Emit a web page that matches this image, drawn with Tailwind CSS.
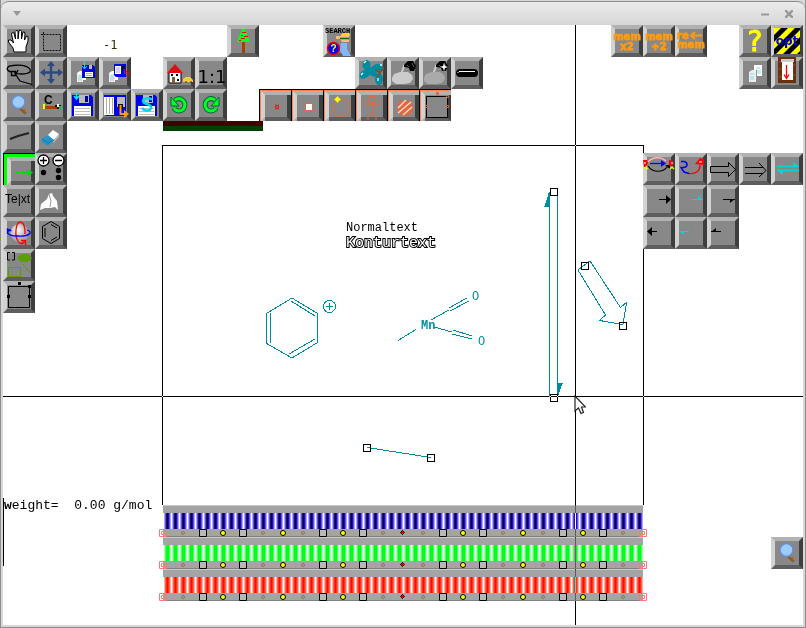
<!DOCTYPE html>
<html lang="en">
<head>
    <meta charset="UTF-8">
    <meta name="viewport" content="width=device-width, initial-scale=1.0">
    <title>Molecule editor</title>
    <script src="https://cdn.jsdelivr.net/npm/@tailwindcss/browser@4"></script>
</head>
<body class="bg-[#d8d8d8]">
    <div class="min-h-screen flex flex-col border-x border-b border-[#8c8c8c] bg-[#d8d8d8]">

        <header class="mt-px h-6 flex items-center justify-between px-2 rounded-t-lg border-t border-[#8c8c8c] bg-linear-to-b from-[#ececec] to-[#d6d6d6]">
            <button type="button" aria-label="Window menu" class="p-1">
                <svg class="w-2 h-[5px]" viewBox="0 0 8 5"><path d="M0 0h8L4 5z" fill="#999"/></svg>
            </button>
            <div class="flex items-center gap-4">
                <button type="button" aria-label="Minimize"><svg class="size-2" viewBox="0 0 8 8"><path d="M0 4.5h8" stroke="#999" stroke-width="2"/></svg></button>
                <button type="button" aria-label="Close" class="mr-1"><svg class="size-2" viewBox="0 0 8 8"><path d="M0 0L8 8M8 0L0 8" stroke="#999" stroke-width="2.5"/></svg></button>
            </div>
        </header>

        <main class="relative flex-1 mx-[2px] mb-[2px] bg-white overflow-hidden isolate">
            <div id="board" class="grid grid-cols-[repeat(25,minmax(32px,1fr))] auto-rows-[32px]">

                <!-- drawing page -->
                <section class="col-start-6 col-end-21 row-start-4 row-end-16 mt-6 -ml-px -mr-px border-x border-t border-black" aria-label="Drawing page">
                    <svg class="w-full h-full overflow-visible" viewBox="163 146 480 359" fill="none" stroke="#008ca0" shape-rendering="crispEdges">
                        <g stroke="none" font-family="'Liberation Mono', monospace">
                            <text x="346" y="231" font-size="12" fill="#000">Normaltext</text>
                            <text x="346" y="247" font-size="15" fill="#fff" stroke="#000" stroke-width="2" paint-order="stroke">Konturtext</text>
                            <g font-size="12" fill="#008ca0">
                                <text x="421" y="329" font-weight="bold">Mn</text>
                                <text x="472" y="300">O</text>
                                <text x="478" y="345">O</text>
                            </g>
                        </g>
                        <path d="M292 298L317.500 313.500V342.500L292 358L266.500 343.500V313.500Z"/>
                        <path d="M270.500 313V343M291 301L315 316M289 354L315 339"/>
                        <circle cx="329.500" cy="306.500" r="6"/>
                        <path d="M326 306.500h7M329.500 303v7"/>
                        <path d="M398 340.500L416 329.500M431 320L449 310M449 308L467 298M450 311L469 301M434 327L452 332M453 330L472 336M452 334L472 339"/>
                        <path d="M549.500 192V397M557.500 192V397"/>
                        <path d="M549.500 192L545 206.500H549.500ZM557.500 396L562 383.500H557.500Z" fill="#008ca0"/>
                        <path d="M578 270L590 261L620.500 307.500L626.500 302.500L623 324.500L599.500 320.500L605.500 315Z"/>
                        <path d="M367 447.500L431 457.500"/>
                        <path stroke="#000" d="M550.500 188.500h7v7h-7zM550.500 394.500h7v7h-7zM581.500 262.500h7v7h-7zM619.500 322.500h7v7h-7zM363.500 444.500h7v7h-7zM427.500 454.500h7v7h-7z"/>
                    </svg>
                </section>

                <p class="col-start-4 row-start-1 pl-1 pt-3 leading-4 text-[12px] text-[#333300] font-[DejaVu_Sans_Mono,monospace]">-1</p>

                <div class="col-start-6 col-end-10 row-start-4 w-[100px]">
                    <div class="h-[5px] bg-[#400000]"></div>
                    <div class="h-[5px] bg-[#004000]"></div>
                </div>

                <p class="col-start-1 col-end-6 row-start-15 row-end-18 mt-[25px] mb-[3px] border-l border-black leading-4 text-[13px] text-black whitespace-pre font-[Liberation_Mono,monospace]"><b>w</b>eight=  0.00 g/mol</p>
            </div>

            <!-- crosshair and pointer -->
            <div class="absolute inset-y-0 left-[572px] w-px bg-white mix-blend-difference pointer-events-none"></div>
            <div class="absolute inset-x-0 top-[371px] h-px bg-white mix-blend-difference pointer-events-none"></div>
            <svg class="absolute left-[571px] top-[370px] w-3 h-5 pointer-events-none" viewBox="0 0 12 20"><path d="M1 1V16L4.500 13L7 18.500L9.500 17.500L7.500 12H11.500Z" fill="#fff" stroke="#222" stroke-width="1.200"/></svg>
        </main>
    </div>

    <script>
        const board = document.getElementById("board");

        // Shared pieces of artwork, all drawn on a 32x32 tile
        const lens = `<path d="M17 18L23 24" stroke="#8a5a28" stroke-width="4"/><path d="M18 18L24 23" stroke="#d09050" stroke-width="1"/><circle cx="15.500" cy="13" r="6.500" fill="#9ccbff" stroke="#6c8cd0" stroke-width="1.500"/>`;
        const sheets = `<path d="M13 14h6v9h-9v-7z" fill="#fff"/><path d="M10 17h6v8h-6z" fill="#eee"/><path d="M11 19h4M11 21h4M11 23h4" stroke="#8dd"/>`;
        const disk = `<path d="M5 6h19l2 2v19H5z" fill="#0000f0"/><path d="M12 6h10v8H12z" fill="#bbb"/><path d="M18 7h3v6h-3z" fill="#0000a0"/><path d="M7 17h17v10H7z" fill="#fff"/><path d="M8 19.500h15M8 22.500h15M8 25.500h15" stroke="#bbb"/>`;
        const mark = (top, bottom) => `<g font-family="'DejaVu Sans', sans-serif" font-weight="bold" font-size="10" fill="#ff9a10" stroke="#ff9a10" stroke-width=".8" text-anchor="middle"><text x="16" y="15">${top}</text><text x="16" y="25">${bottom}</text></g>`;
        const lamp = (cloud) => `<path d="M14 18L17 9l4 1" fill="none" stroke="#ccc" stroke-width="2"/><path d="M5 21l2-4 6-2h8l4 3 1 4-3 4-6 1H9l-4-3z" fill="${cloud}"/><path d="M17 8l4-4h5l3 5-2 5h-4l-1-3-5-1z" fill="#000"/><path d="M20 8l2 2M25 6l2 4" stroke="#666"/>`;
        const frame = (color, inset) => `<path d="M0 32V0H32V${inset}H${inset}V32Z" fill="${color}"/>`;
        const picked = (color, w) => frame("#b2b2b2", w + 5) + `<path d="M${w + 1} ${w + 1}L${w + 5} ${w + 5}V28L${w + 1} 32Z" fill="#d2d2d2"/>` + frame(color, w + 1) + frame("#000", 1);
        const turn = `<path d="M12 11C18 7 24 13 21 19C19 23 13 23 11 19" fill="none" stroke="#063" stroke-width="5"/><path d="M8 8v9h8z" fill="#0f2" stroke="#063"/><path d="M12 11C18 7 24 13 21 19C19 23 13 23 11 19" fill="none" stroke="#0f2" stroke-width="3"/>`;

        const tools = [
            [1, 1, "Pan", `<path d="M11 27L10 23L5.500 17V15H8L10.500 18L8.500 9L9.500 7.500L11 8L12.500 14L12 6.500L13 5.500L15 6V14L16 5.500L17.500 5L18.500 6.500V14L20 7L21.500 7L22 9L21.500 15L23.500 11L25 11.500V16L23 22V27Z" fill="#fff" stroke="#000"/>`],
            [2, 1, "Select area", `<path d="M8.500 9.500h17v16h-17zM6 9.500h2M8.500 7v2" fill="none" stroke="#111" stroke-dasharray="2 1"/>`],
            [1, 2, "Lasso", `<path d="M9 15C2 14 3 9 10 8.500C20 7 29 10 27 15C23 18 14 17 11 16M8.500 14.500h4v4h-4zM13 18L17 24L29 27.500M12 19L15 13" fill="none" stroke="#000" stroke-width="1.300"/>`],
            [2, 2, "Move", `<path d="M16 6V25M7 15.500H26" stroke="#2c4a80" stroke-width="2.500"/><path d="M12 9l4-5 4 5zM12 22l4 5 4-5zM10 11.500l-5 4 5 4zM23 11.500l5 4-5 4z" fill="#2c4a80"/>`],
            [3, 2, "Save copy", sheets + `<path d="M15 8h11l2 2v11H15z" fill="#0000f0"/><path d="M18 15h8v5h-8z" fill="#fff"/><path d="M22 8h3v4h-3z" fill="#bbb"/><path d="M19 16.500h6M19 18.500h6" stroke="#aaa"/><path d="M17.500 5v6M15 9l2.500 3L20 9" stroke="#00e8f0" fill="none"/>`],
            [4, 2, "Load copy", sheets + `<path d="M15 7h12v13H17l-2-2z" fill="#0000f0"/><path d="M16 9h6v8h-6z" fill="#fff"/><path d="M18 10v6M20 10v6" stroke="#aaa"/><path d="M23 9h3v4h-3z" fill="#111"/><path d="M25.500 12v4.500h4M27 14l3 2.500-3 2.500" stroke="#f00" fill="none"/>`],
            [1, 3, "Zoom", lens],
            [2, 3, "Atom colour", `<text x="9" y="15" font-size="12" font-weight="bold" font-family="'Liberation Sans', sans-serif">C</text><path d="M8 15h2v5H8z" fill="#ff0"/><path d="M10 17h10v3H10z" fill="#a84000"/><path d="M20 16h6v4h-6z" fill="#111"/><path d="M20 18h2v2h-2z" fill="#f00"/><path d="M22 15h2v3h-2z" fill="#fff"/><path d="M24 17h2v3h-2z" fill="#0c4"/>`],
            [3, 3, "Save", disk + `<path d="M9.500 3v7M7 7l2.500 3L12 7" stroke="#00e8f0" fill="none" stroke-width="1.500"/>`],
            [4, 3, "Load", `<path d="M5 6h22v21H7l-2-2z" fill="#0000f0"/><path d="M5 8h10v18H5z" fill="#fff"/><path d="M7.500 9v16M10.500 9v16M13.500 9v16" stroke="#aaa"/><path d="M18 8h8v10h-8z" fill="#bbb"/><path d="M19 15h5v5h-5z" fill="#111"/><path d="M21.500 16v9H26" stroke="#ff9a10" stroke-width="2" fill="none"/><path d="M25 21l5 4-5 4z" fill="#ff9a10"/>`],
            [5, 3, "Save as", disk + `<path d="M21 11C19 8 12 9 12 12C12 16 21 14 20 19C19 23 13 22 11 19" fill="none" stroke="#00d8e8" stroke-width="2.500"/>`],
            [1, 4, "Bond", `<path d="M7 18L15 15L26 12" stroke="#222" stroke-width="2" fill="none"/>`],
            [2, 4, "Erase", `<path d="M18 9l6 4-6 7-6-5z" fill="#fff"/><path d="M24 13l-6 7v2l6-6z" fill="#bbb"/><path d="M13 14l6 5-6 6-6-4v-3z" fill="#2496cc"/><path d="M7 18l6 4 6-3" stroke="#1878a8" fill="none"/>`],
            [1, 5, "Arrow", picked("#0f0", 3) + `<path d="M12 19.500H27" stroke="#00d800"/><path d="M25 16l5 3.500-5 3.500z" fill="#00d800"/>`],
            [2, 5, "Charge", `<path d="M4 4h24v24H4z" fill="#888"/><g fill="#fff" stroke="#000" stroke-width="1.300"><circle cx="8.500" cy="7.500" r="5.500"/><circle cx="23.500" cy="7.500" r="5.500"/></g><path d="M5 7.500h7M8.500 4v7M20 7.500h7" stroke="#000" stroke-width="1.300"/><circle cx="8.500" cy="19.500" r="2.700"/><circle cx="23.500" cy="17.500" r="2.700"/><circle cx="23.500" cy="24.500" r="2.700"/>`],
            [1, 6, "Text", `<text x="2" y="18" font-size="12" font-family="'Liberation Sans', sans-serif">Te|xt</text>`],
            [2, 6, "Template", `<path d="M5 25L6 19L12 14L14 9L17 8L18 11L22 16L23 25L20 22L15 23L10 23Z" fill="#fff"/><path d="M14 9l2 7-1 6" stroke="#999" fill="none"/>`],
            [1, 7, "Rotate", `<defs><radialGradient id="ball" cx=".4" cy=".35"><stop offset="0" stop-color="#fff"/><stop offset="1" stop-color="#aaa"/></radialGradient></defs><circle cx="16.500" cy="16" r="9" fill="url(#ball)"/><path d="M22 24C17 31 12 22 13 13C14 2 21 2 22 14V17" fill="none" stroke="#f00" stroke-width="1.300"/><path d="M18 23.500h4.500v4.500" fill="none" stroke="#f00" stroke-width="1.300"/><path d="M8 13C2 14 4 19 14 19C26 20 31 15 24 13" fill="none" stroke="#00f" stroke-width="1.300"/><path d="M4.500 17V12l4 2" fill="none" stroke="#00f" stroke-width="1.300"/>`],
            [2, 7, "Benzene", `<path d="M16 4.500L24.500 9.500V21.500L16 26.500L7.500 21.500V9.500ZM10 11V20M16 7.500L22 11M16 23.500L22 20" fill="none" stroke="#000"/>`],
            [1, 8, "Shapes", `<path d="M7 3.500H4.500V11H7M9 3.500H11.500V11H9" fill="none" stroke="#000"/><path d="M14 9L18 5h7l4 4-4 4h-7z" fill="#5a9e00"/><path d="M5.500 18.500h12v9h-12zM20 15l8 10" fill="none" stroke="#5a9e00"/>`],
            [1, 9, "Resize", `<path d="M5.500 5.500h21v21h-21z" fill="none" stroke="#000"/><path d="M15 1h3v3h-3zM25 4h3v3h-3zM4 14h3v3H4zM25 14h3v3h-3z"/>`],

            [8, 1, "Tree", `<path d="M15 17h3v11h-3z" fill="#a84000"/><path d="M15 4h3l5 13H10z" fill="#0f2"/><path d="M15 7.500h4M14 10.500h2M17 11.500h4M14 13.500h4M12 15.500h2" stroke="#e00"/>`],
            [6, 2, "Home", `<path d="M6 15h12v11H6z" fill="#fff" stroke="#000"/><path d="M12 7L20 16H4z" fill="#e01010"/><path d="M9 20h3v6H9z" fill="#8a5a28"/><path d="M8 17h2v2H8zM13 17h2v2h-2zM14 22h2v2h-2z"/><path d="M20 25v-3l3-2h4l3 3v2z" fill="#ffc83c"/><path d="M22 25h2M27 25h2" stroke="#333"/>`],
            [7, 2, "Actual size", `<text x="17" y="26" font-size="18" text-anchor="middle" font-family="'DejaVu Sans', sans-serif">1:1</text>`],
            [6, 3, "Undo", turn],
            [7, 3, "Redo", `<g transform="matrix(-1 0 0 1 32 0)">${turn}</g>`],

            [11, 1, "Search", `<path d="M18 18h6v6l4 7h-8l-3-6z" fill="#80b8ff"/><path d="M13 11h5l3-1h5v7h-7l-2-3h-4z" fill="#ffb48c"/><path d="M18 10l2-2h6l1 3h-9z" fill="#fd0"/><path d="M17 13.500h9" stroke="#060" stroke-width="1.500"/><circle cx="10.500" cy="23.500" r="6" fill="#00f" stroke="#e00" stroke-width="1.500"/><text x="10.500" y="27" font-size="10" font-weight="bold" fill="#ff0" text-anchor="middle" font-family="'Liberation Sans', sans-serif">?</text><text x="2" y="8" font-size="7" font-weight="bold" font-family="'Liberation Mono', monospace">SEARCH</text>`],
            [12, 2, "Orbitals", `<g fill="#008ca0"><ellipse cx="11.500" cy="8" rx="4" ry="5"/><ellipse cx="10" cy="17" rx="6" ry="4" transform="rotate(-35 10 17)"/><ellipse cx="22" cy="11" rx="6" ry="4" transform="rotate(-20 22 11)"/><ellipse cx="24" cy="22" rx="4" ry="6"/><path d="M12 11l7-1 4 9-4 1-8-4z"/></g><path d="M9 6l2-2M6 18l2-2M23 21v3M25 8h2" stroke="#dff" stroke-width="1.300"/><path d="M21 13l4 3-3 4M29 11l-4 4" stroke="#7a5030" stroke-width="2" fill="none"/>`],
            [13, 2, "Fill", lamp("#ccc")],
            [14, 2, "Fill new", lamp("#aaa") + `<path d="M25 6l1 3 3 1-3 1-1 3-1-3-3-1 3-1z" fill="#fff"/>`],
            [15, 2, "Pill", `<rect x="5" y="12" width="22" height="8" rx="4"/><path d="M8 14.500h16M7 15v1" stroke="#fff"/>`],

            [9, 3, "Mark atom", picked("#ff7f50", 1) + `<circle cx="18" cy="18" r="1.500" fill="none" stroke="#f00"/><path d="M16 16h1M19 16h1M16 20h1M19 20h1" stroke="#f00"/>`],
            [10, 3, "Mark bond", picked("#ff7f50", 1) + `<path d="M14.500 14.500h7v7h-7z" fill="#fff" stroke="#e06840"/>`],
            [11, 3, "Mark ring", picked("#ff7f50", 1) + `<path d="M14 11h9l4 5v6l-4 5h-9l-4-4v-7z" fill="none" stroke="#e06840"/><path d="M14.500 7l1.500 2 2 1.500-2 1.500-1.500 2-1.500-2-2-1.500 2-1.500z" fill="#ff0"/>`],
            [12, 3, "Mark molecule", picked("#ff7f50", 1) + `<path d="M14.500 7.500h6v6h-6zM9 11l3 5h11l3-5M17.500 13v11M13 31v-4l4-3 4 3v4" fill="none" stroke="#e06840"/>`],
            [13, 3, "Mark pattern", picked("#ff7f50", 1) + `<circle cx="18" cy="19" r="8" fill="#e06840"/><path d="M11 19l8-8M11 24L24 13M16 26l9-8" stroke="#ffd8c8" stroke-width="1.500"/>`],
            [14, 3, "Mark box", picked("#ff7f50", 1) + `<path d="M7.500 7.500h21v21h-21z" fill="none" stroke="#000"/><path d="M17 3h3v3h-3z" fill="#e06840"/><path d="M27.500 6.500h2v2h-2zM6.500 16.500h2v2h-2zM27.500 16.500h2v2h-2z" fill="none" stroke="#e06840"/>`],

            [20, 1, "Memory x2", mark("mem", "x2")],
            [21, 1, "Memory ÷2", mark("mem", "÷2")],
            [22, 1, "Recall memory", `<g font-family="'DejaVu Sans', sans-serif" font-weight="bold" font-size="10" fill="#ff9a10" stroke="#ff9a10" stroke-width=".8"><text x="2" y="14">re</text><text x="16" y="23" text-anchor="middle">mem</text></g><path d="M27 10.500H17M20 7l-4 3.500 4 3.500" stroke="#ff9a10" stroke-width="2" fill="none"/>`],
            [24, 1, "Help", `<text x="16" y="26" font-size="28" fill="#ff0" stroke="#ff0" text-anchor="middle" font-family="'DejaVu Sans', sans-serif">?</text>`],
            [25, 1, "Options", `<path d="M3 3h26v26H3z" fill="#ff0"/><path d="M3 10l7-7h7L3 17zM3 24L24 3h5v2L5 29H3zM12 29l17-17v7L19 29zM26 29l3-3v3z"/><text x="16" y="20" font-size="12" font-weight="bold" fill="#0000e0" text-anchor="middle" font-family="'DejaVu Sans', sans-serif">opt</text>`],
            [24, 2, "Copy", `<path d="M15 8h8v11h-8z" fill="#fff"/><path d="M10 15l3-2h4v12h-7z" fill="#eee"/><path d="M17 11h4M17 14h5M17 16h5M11 17h4M11 20h4M11 22h4" stroke="#8dd"/><path d="M17.500 13v9" stroke="#999"/>`],
            [25, 2, "Quit", `<path d="M7 0h18v26H7z" fill="#6c3010"/><path d="M8 5h3M8 12h3M22 8h2M22 18h2M8 20h3" stroke="#9a5030"/><path d="M10 2h13v3h-1v18H11V5h-1z" fill="#fff"/><path d="M10 2h13v3H10z" fill="#ccc"/><path d="M15.500 8v12M13 17.500l2.500 4 2.500-4" stroke="#f00" stroke-width="1.300" fill="none"/>`],

            [21, 5, "Reaction cycle", `<path d="M5 9C9 4 18 3 23 8" stroke="#ffb0b0" stroke-width="1.500" fill="none"/><path d="M5 13C10 20 20 20 25 13" stroke="#000" stroke-width="1.200" fill="none"/><path d="M22 12h5v4z"/><path d="M7 10.500H20" stroke="#00f" stroke-width="1.300"/><path d="M18 7l5 3.500-5 3.500z" fill="#00f"/><path d="M0 7h4l1 3-2 4H1zM26 7l4 1v3l-1 3-3-2z" fill="#f00"/><path d="M1 16l2-2 2 2M27 16l2-2 2 2" stroke="#cf0" stroke-width="1.500" fill="none"/><path d="M1 10h2M28 10h2" stroke="#fff"/>`],
            [22, 5, "Curved arrow", `<path d="M6 8.500H9C13 9 13 14 9 14.500H6L9 19L14 20.500" fill="none" stroke="#00f" stroke-width="1.500"/><path d="M14 20.500C21 21 25 18 25 12" fill="none" stroke="#f00" stroke-width="1.300"/><path d="M20 11L25 5L29 6V12Z" fill="#f00"/><path d="M24 9h3" stroke="#fff"/>`],
            [23, 5, "Block arrow", `<path d="M3.500 13.500H21.500V9.500L28.500 16.500L21.500 23.500V19.500H3.500Z" fill="none" stroke="#000"/>`],
            [24, 5, "Retro arrow", `<path d="M6 14.500H24M6 20.500H24M20 10L27 17.500L20 24" fill="none" stroke="#000"/>`],
            [25, 5, "Equilibrium arrow", `<path d="M6 13.500H28M6 17.500H28" stroke="#00d8d8" stroke-width="1.300"/><path d="M22 9l6 4.500h-6zM12 22l-6-4.500h6z" fill="#00d8d8"/>`],
            [21, 6, "Arrow right", `<path d="M16 14.500H26" stroke="#000"/><path d="M23 10l5 4.500-5 4.500z"/>`],
            [22, 6, "Upper half arrow right", `<path d="M16 14.500H28" stroke="#00d8d8"/><path d="M23 11l5 4h-5z" fill="#00d8d8"/>`],
            [23, 6, "Lower half arrow right", `<path d="M16 14.500H28" stroke="#000"/><path d="M23 18l5-4h-5z"/>`],
            [21, 7, "Arrow left", `<path d="M6 14.500H14" stroke="#000"/><path d="M9 10l-5 4.500 5 4.500z"/>`],
            [22, 7, "Lower half arrow left", `<path d="M4 14.500H14" stroke="#00d8d8"/><path d="M9 18l-5-4h5z" fill="#00d8d8"/>`],
            [23, 7, "Upper half arrow left", `<path d="M4 14.500H14" stroke="#000"/><path d="M9 11l-5 4h5z"/>`],
            [25, 17, "Zoom view", lens],
        ];

        tools.forEach(([col, row, label, art]) => {
            board.insertAdjacentHTML("beforeend", `
                <button type="button" aria-label="${label}" title="${label}" style="grid-area: ${row} / ${col}"
                    class="size-8 border-4 border-t-[#b2b2b2] border-l-[#d2d2d2] border-r-[#3e3e3e] border-b-[#5e5e5e] bg-[#888]">
                    <svg class="size-8 -m-1 max-w-none" viewBox="0 0 32 32">${art}</svg>
                </button>`);
        });

        // Handles under each colour strip, r = end, o = small ring, b = box, y = yellow, d = centre
        const handles = {
            r: `<path d="M.5 .5h7v7h-7zM2.500 2.500h3v3h-3z" fill="none" stroke="#ff7878"/>`,
            o: `<circle cx="4" cy="4" r="1.500" fill="none" stroke="#967050"/>`,
            b: `<path d="M.5 .5h7v7h-7z" fill="#b8b8b8" stroke="#000"/>`,
            y: `<circle cx="4" cy="4" r="2.500" fill="#ff0" stroke="#000"/>`,
            d: `<path d="M3.500 1.500L5.500 3.500L3.500 5.500L1.500 3.500Z" fill="#f00" stroke="#000"/>`,
        };
        const order = "robyboyobybodobyboyobybor";

        const strips = [
            ["Blue", "bg-[repeating-linear-gradient(90deg,#fff_0_1px,#a8a8ff_1px_2px,#5850e8_2px_3px,#2808a8_3px_4px,#000018_4px_5px,#2808a8_5px_6px,#5850e8_6px_7px,#a8a8ff_7px_8px)]"],
            ["Green", "bg-[repeating-linear-gradient(90deg,#fff_0_1px,#b0ffb0_1px_2px,#50ff58_2px_3px,#00ff20_3px_6px,#50ff58_6px_7px,#b0ffb0_7px_8px)]"],
            ["Red", "bg-[repeating-linear-gradient(90deg,#fff_0_1px,#ffb0a8_1px_2px,#ff6048_2px_3px,#ff3010_3px_4px,#ff0800_4px_5px,#ff3010_5px_6px,#ff6048_6px_7px,#ffb0a8_7px_8px)]"],
        ];

        strips.forEach(([name, stripes], i) => {
            board.insertAdjacentHTML("beforeend", `
                <div class="relative col-start-6 col-end-21 border-t border-[#c8c8c8] bg-[#a4a4a4] pt-[7px]" style="grid-row: ${16 + i}">
                    <div class="h-4 ${stripes}"></div>
                    <div class="flex justify-between h-2 shadow-[inset_0_-1px_#808080]">
                        ${[...order].map((h) => `<svg class="size-2 -mx-1" viewBox="0 0 8 8">${handles[h]}</svg>`).join("")}
                    </div>
                    <input type="range" min="0" max="100" aria-label="${name}" class="absolute inset-0 w-full opacity-0">
                </div>`);
        });
    </script>
</body>
</html>
